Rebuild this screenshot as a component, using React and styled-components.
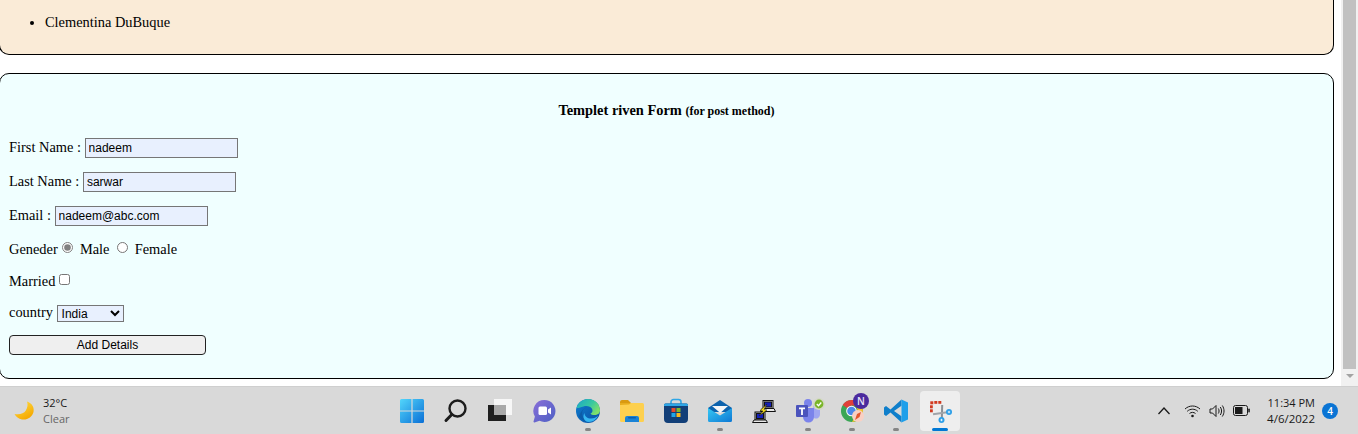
import styled, { createGlobalStyle } from "styled-components";

const GlobalStyle = createGlobalStyle`
  html, body {
    margin: 0;
    padding: 0;
    overflow: hidden;
    background: #fff;
  }
`;

const Screen = styled.div`
  width: 1358px;
  height: 434px;
  overflow: hidden;
  display: flex;
  flex-direction: column;
`;

const Browser = styled.div`
  height: 386px;
  display: flex;
  background: #fff;
`;

const Page = styled.div`
  flex: 1;
  min-width: 0;
  font-family: "Liberation Serif", "Times New Roman", serif;
  font-size: 14.4px;
  color: #000;
`;

const Card = styled.section`
  margin: 0 7px 0 -1px;
  border: 1px solid #000;
  border-radius: 10px;
  background: ${(p) => p.$bg};
`;

const UsersCard = styled(Card)`
  border-top: none;
  border-radius: 0 0 10px 10px;
  height: 54px;
  margin-bottom: 18px;

  ul {
    margin: 0;
    padding: 13px 0 0 45px;
  }
  li {
    line-height: 18px;
  }
`;

const FormCard = styled(Card)`
  padding: 26px 0 0 9px;
  height: 278px;
`;

const Heading = styled.h4`
  margin: 0 0 16px;
  font-size: 14.4px;
  line-height: 20px;
  text-align: center;
  padding-right: 9px;

  small {
    font-size: 12px;
  }
`;

const Row = styled.div`
  height: 20px;
  display: flex;
  align-items: center;
  margin-bottom: ${(p) => p.$gap || 0}px;
  white-space: pre;
`;

const TextInput = styled.input`
  width: 153px;
  height: 20px;
  box-sizing: border-box;
  border: 1px solid #767676;
  background: #e8f0fe;
  padding: 1px 3px;
  margin: 2px 0 0;
  font-family: "Liberation Sans", Arial, sans-serif;
  font-size: 12px;
  color: #000;
  outline: none;
`;

const Radio = styled.input`
  width: 11px;
  height: 11px;
  margin: 0 3px 3px ${(p) => p.$left}px;
  accent-color: #808080;
`;

const Check = styled.input`
  width: 11px;
  height: 11px;
  margin: 0 0 3px 0;
`;

const Country = styled.select`
  width: 67px;
  height: 17px;
  box-sizing: border-box;
  border: 1px solid #767676;
  border-radius: 0;
  background-color: #e8f0fe;
  font-family: "Liberation Sans", Arial, sans-serif;
  font-size: 12px;
  margin: 2px 0 0;
  padding: 0;
`;

const SubmitButton = styled.button`
  width: 197px;
  height: 20px;
  box-sizing: border-box;
  border: 1px solid #222;
  border-radius: 4px;
  background: #efefef;
  font-family: "Liberation Sans", Arial, sans-serif;
  font-size: 12px;
  color: #000;
  padding: 0;
`;

const Scrollbar = styled.div`
  width: 17px;
  background: #f1f1f1;
  display: flex;
  flex-direction: column;
  align-items: center;
`;

const Thumb = styled.div`
  width: 13px;
  height: 369px;
  background: #c1c1c1;
`;

const ArrowDown = styled.div`
  margin-top: 5px;
  width: 0;
  height: 0;
  border-left: 4px solid transparent;
  border-right: 4px solid transparent;
  border-top: 4px solid #a3a3a3;
`;

const Taskbar = styled.footer`
  height: 48px;
  background: #d9d9d9;
  border-top: 1px solid #cfcfcf;
  box-sizing: border-box;
  display: flex;
  align-items: center;
  font-family: "Open Sans", "Noto Sans", sans-serif;
  color: #1a1a1a;
`;

const Weather = styled.div`
  width: 392px;
  padding-left: 13px;
  box-sizing: border-box;
  display: flex;
  align-items: center;
  gap: 8px;
`;

const WeatherText = styled.div`
  font-size: 11px;
  line-height: 16px;
  padding-top: 1px;
  span {
    display: block;
  }
  span + span {
    color: #666;
  }
`;

const Apps = styled.div`
  display: flex;
  gap: 4px;
`;

const AppButton = styled.div`
  position: relative;
  width: 40px;
  height: 40px;
  margin-top: 1px;
  border-radius: 4px;
  display: flex;
  align-items: center;
  justify-content: center;
  background: ${(p) => (p.$active ? "#eeeeee" : "transparent")};

  svg {
    overflow: visible;
  }
`;

const RunDot = styled.i`
  position: absolute;
  left: 50%;
  bottom: 0;
  transform: translateX(-50%);
  width: ${(p) => (p.$active ? 16 : 6)}px;
  height: 3px;
  border-radius: 2px;
  background: ${(p) => (p.$active ? "#0078d4" : "#858585")};
`;

const Tray = styled.div`
  margin-left: auto;
  display: flex;
  align-items: center;
`;

const TrayIcons = styled.div`
  display: flex;
  align-items: center;
  gap: 8px;
  margin-right: 17px;

  svg:first-child {
    margin-right: 5px;
  }
`;

const Clock = styled.div`
  text-align: right;
  font-size: 11px;
  line-height: 16px;
  color: #1a1a1a;

  div + div {
    font-size: 11.5px;
  }
`;

const Badge = styled.div`
  width: 16px;
  height: 16px;
  margin: 0 20px 0 7px;
  border-radius: 50%;
  background: #0a74d4;
  color: #fff;
  font-size: 10px;
  font-weight: 600;
  display: flex;
  align-items: center;
  justify-content: center;
`;

const Moon = () => (
  <svg width="22" height="22" viewBox="0 0 22 22">
    <defs>
      <linearGradient id="moon" x1="0" y1="0" x2="0.6" y2="1">
        <stop offset="0" stopColor="#ffe14d" />
        <stop offset="1" stopColor="#f5a800" />
      </linearGradient>
    </defs>
    <path d="M14 1.500c5 1.600 7.500 6 6.500 10.500-1.100 5-6.400 8.300-11.500 7.400C5.500 18.800 3 17 1.500 14c5 1 9.200-.2 11.300-3.500C14.600 7.700 15 4.500 14 1.500z" fill="url(#moon)" />
  </svg>
);

const WindowsIcon = () => (
  <svg width="24" height="24" viewBox="0 0 24 24">
    <defs>
      <linearGradient id="win" x1="0" y1="0" x2="1" y2="1">
        <stop offset="0" stopColor="#52d6fb" />
        <stop offset="1" stopColor="#0a6fd6" />
      </linearGradient>
    </defs>
    <path d="M1.500 0H11.400V11.400H0V1.500A1.500 1.500 0 0 1 1.500 0zM12.600 0H22.500A1.500 1.500 0 0 1 24 1.500V11.400H12.600zM0 12.600H11.400V24H1.500A1.500 1.500 0 0 1 0 22.500zM12.600 12.600H24V22.500A1.500 1.500 0 0 1 22.500 24H12.600z" fill="url(#win)" />
  </svg>
);

const SearchIcon = () => (
  <svg width="24" height="24" viewBox="0 0 24 24" fill="none" stroke="#1c1c1c">
    <circle cx="13.500" cy="9.500" r="8" strokeWidth="2.400" />
    <path d="M7.800 15.500L2 21.500" strokeWidth="3" strokeLinecap="round" />
  </svg>
);

const TaskViewIcon = () => (
  <svg width="24" height="24" viewBox="0 0 24 24">
    <rect x="6" y="0" width="18" height="16" fill="#f7f7f7" />
    <rect x="0" y="6" width="18" height="16" fill="#1f1f1f" />
    <rect x="6" y="6" width="12" height="10" fill="#a9a9a9" />
  </svg>
);

const ChatIcon = () => (
  <svg width="24" height="24" viewBox="0 0 24 24">
    <defs>
      <linearGradient id="chat" x1="0" y1="0" x2="1" y2="1">
        <stop offset="0" stopColor="#8a6fd8" />
        <stop offset="1" stopColor="#4c5fc4" />
      </linearGradient>
    </defs>
    <path d="M12.500 1a11 11 0 1 1-5 20.800L2.500 23.500c-.6.200-1.100-.3-1-.9l1.400-5A11 11 0 0 1 12.500 1z" fill="url(#chat)" />
    <rect x="6.500" y="7.500" width="8.500" height="8.500" rx="1.500" fill="#fff" />
    <path d="M16 10.500l3-2v7l-3-2z" fill="#fff" />
  </svg>
);

const EdgeIcon = () => (
  <svg width="24" height="24" viewBox="0 0 24 24">
    <defs>
      <linearGradient id="edgeA" x1="0" y1="0" x2="1" y2="0.6">
        <stop offset="0" stopColor="#1aa7c8" />
        <stop offset="0.6" stopColor="#38c8a0" />
        <stop offset="1" stopColor="#7fe06a" />
      </linearGradient>
      <linearGradient id="edgeB" x1="0" y1="0" x2="1" y2="1">
        <stop offset="0" stopColor="#0f7fd0" />
        <stop offset="1" stopColor="#0b4ea2" />
      </linearGradient>
    </defs>
    <circle cx="12" cy="12" r="12" fill="url(#edgeB)" />
    <path d="M0.500 9C2 3.500 6.500 0 12 0c7 0 12 5 12 11.500 0 3-2.500 4.500-5.500 4.500-2 0-3.500-.5-4-1.500 2-1 2.500-3 1.500-4.800C14.500 7.500 11 6.500 7.500 7.500 4.500 8.300 2 9.500.5 9z" fill="url(#edgeA)" />
    <path d="M11 8.500c-3 .5-5 3-5 6 0 4 3.500 7.500 8 8-5 .5-9-1.500-11-5C5 11.500 8 9 11 8.500z" fill="#0c5ca8" />
    <path d="M8.500 14c0 3.200 3 5.600 6.500 5.600 3 0 5.500-1 7-3-1.500 4-5 6.400-9 6.400-3 0-5-2-5.500-4.500-.3-1.800.3-3.300 1-4.500z" fill="#36b6f0" />
  </svg>
);

const FolderIcon = () => (
  <svg width="24" height="22" viewBox="0 0 24 22">
    <path d="M0 2a2 2 0 0 1 2-2h6l3 3H0z" fill="#d99a10" />
    <rect x="0" y="3" width="24" height="19" rx="1.500" fill="#fdd04f" />
    <path d="M0 5l9-.5L11 3H0z" fill="#e7ad1e" />
    <path d="M5 22v-4a2 2 0 0 1 2-2h10a2 2 0 0 1 2 2v4z" fill="#1a83d6" />
    <rect x="8" y="17" width="8" height="1.500" rx=".7" fill="#0d5fae" />
  </svg>
);

const StoreIcon = () => (
  <svg width="24" height="24" viewBox="0 0 24 24">
    <path d="M7 5V3a2.500 2.500 0 0 1 2.500-2.500h5A2.500 2.500 0 0 1 17 3v2" fill="none" stroke="#2ea6e6" strokeWidth="1.600" />
    <path d="M0 6a1.500 1.500 0 0 1 1.500-1.500h21A1.500 1.500 0 0 1 24 6v14a4 4 0 0 1-4 4H4a4 4 0 0 1-4-4z" fill="#123f78" />
    <path d="M0 6a1.500 1.500 0 0 1 1.500-1.500h21A1.500 1.500 0 0 1 24 6v1H0z" fill="#2ea6e6" />
    <rect x="7.500" y="9" width="4" height="4" fill="#e8492c" />
    <rect x="12.500" y="9" width="4" height="4" fill="#7eb92e" />
    <rect x="7.500" y="14" width="4" height="4" fill="#21a4e8" />
    <rect x="12.500" y="14" width="4" height="4" fill="#fbb81c" />
  </svg>
);

const MailIcon = () => (
  <svg width="24" height="24" viewBox="0 0 24 24">
    <defs>
      <linearGradient id="mailA" x1="0" y1="0" x2="1" y2="1">
        <stop offset="0" stopColor="#36c8f4" />
        <stop offset="1" stopColor="#0d78d4" />
      </linearGradient>
    </defs>
    <path d="M0 9L12 1l12 8v4H0z" fill="#0c62ad" />
    <path d="M4 7h16L12.300 14z" fill="#f4f6f8" />
    <path d="M0 9l12 7.500L24 9v12.500a1.500 1.500 0 0 1-1.500 1.500h-21A1.500 1.500 0 0 1 0 21.500z" fill="url(#mailA)" />
  </svg>
);

const PuttyIcon = () => (
  <svg width="24" height="24" viewBox="0 0 24 24" stroke="#111" strokeWidth="1">
    <rect x="11" y="1.500" width="10" height="8" fill="#c9c9c9" />
    <rect x="12.500" y="3" width="7" height="5" fill="#1520b8" />
    <path d="M10 9.500h12l1.500 3H8.500z" fill="#e8e8e8" />
    <rect x="3" y="13" width="10" height="8" fill="#c9c9c9" />
    <rect x="4.500" y="14.500" width="7" height="5" fill="#1520b8" />
    <path d="M2 21h12l1.500 2.500H.5z" fill="#e8e8e8" />
    <path d="M15 5L8 11.500l3 .5-4 5 8-6-3-.5z" fill="#f7e017" strokeWidth=".5" />
  </svg>
);

const TeamsIcon = () => (
  <svg width="26" height="26" viewBox="0 0 26 26">
    <circle cx="13" cy="5" r="4" fill="#7b83eb" />
    <circle cx="21" cy="8.500" r="2.800" fill="#a0a6f1" />
    <path d="M8 10h11v9a5.500 5.500 0 0 1-11 0z" fill="#7b83eb" />
    <path d="M19 11h6v6a4 4 0 0 1-6 3z" fill="#a0a6f1" />
    <rect x="1" y="7" width="12" height="12" rx="1" fill="#4b53bc" />
    <path d="M4 9.500h6v1.700H7.900v5.800H6.100v-5.800H4z" fill="#fff" />
    <circle cx="24" cy="6" r="6" fill="#d4d8c6" />
    <circle cx="24" cy="6" r="4.400" fill="#7ab52a" />
    <path d="M21.800 6l1.700 1.700 2.800-3.200" fill="none" stroke="#fff" strokeWidth="1.300" />
  </svg>
);

const ChromeIcon = () => (
  <svg width="30" height="30" viewBox="0 0 30 30">
    <circle cx="15" cy="15" r="11" fill="#3aa655" />
    <path d="M15 4a11 11 0 0 1 9.500 5.500H15a5.500 5.500 0 0 0-4.800 2.800L5.700 9A11 11 0 0 1 15 4z" fill="#e0403a" />
    <path d="M24.500 9.500A11 11 0 0 1 15 26l4.700-8a5.500 5.500 0 0 0 0-6z" fill="#f5c52c" />
    <circle cx="14.500" cy="15" r="5.300" fill="#fff" />
    <circle cx="14.500" cy="15" r="4.300" fill="#4a88ea" />
    <circle cx="21" cy="20" r="6" fill="#f8d0c4" />
    <path d="M18 24l2-6 4-2-1.500 5z" fill="#e4572e" />
    <circle cx="24" cy="5" r="8" fill="#4b2a9e" />
    <text x="24" y="8.500" textAnchor="middle" fontSize="10" fontWeight="600" fontFamily="'Open Sans', sans-serif" fill="#e8e4f6">N</text>
  </svg>
);

const VsCodeIcon = () => (
  <svg width="24" height="24" viewBox="0 0 24 24">
    <path d="M17.500 0.500L6.500 10.500 2 7 0 8.500v7L2 17l4.500-3.500 11 10V17.300L10 12l7.500-5.300z" fill="#0f7fcb" />
    <path d="M17.500 0.500L24 3.600v16.800l-6.500 3.100z" fill="#1e9fea" />
  </svg>
);

const SnipIcon = () => (
  <svg width="26" height="26" viewBox="0 0 26 26">
    <path d="M15.200 7l-.4 15" stroke="#8b8f95" strokeWidth="2" />
    <path d="M6 16.200L22 14" stroke="#a0a4a9" strokeWidth="2" />
    <rect x="3.300" y="3.300" width="3" height="3" fill="#d23a20" />
    <rect x="7.300" y="3" width="3" height="2.800" fill="#d23a20" />
    <rect x="11.300" y="3" width="3" height="2.800" fill="#d23a20" />
    <rect x="3" y="7.300" width="2.800" height="3" fill="#d23a20" />
    <rect x="3" y="11.300" width="2.800" height="3" fill="#d23a20" />
    <circle cx="22" cy="14" r="3" fill="#2d9fe8" />
    <path d="M20.800 14h2.400M22 12.800v2.400" stroke="#fff" strokeWidth=".8" />
    <circle cx="14.500" cy="22" r="3" fill="#2d9fe8" />
    <path d="M13.300 22h2.400M14.500 20.800v2.400" stroke="#fff" strokeWidth=".8" />
  </svg>
);

const ChevronIcon = () => (
  <svg width="14" height="9" viewBox="0 0 14 9" fill="none" stroke="#1a1a1a" strokeWidth="1.300">
    <path d="M1.500 8L7 2l5.500 6" />
  </svg>
);

const WifiIcon = () => (
  <svg width="17" height="14" viewBox="0 0 17 14" fill="none" stroke="#1a1a1a" strokeWidth="1">
    <path d="M1 5c4.200-4 10.800-4 15 0" />
    <path d="M3.200 7.300c3-2.800 7.600-2.800 10.600 0" />
    <path d="M5.500 9.500c1.700-1.500 4.300-1.500 6 0" />
    <circle cx="8.500" cy="12" r="1.300" fill="#1a1a1a" stroke="none" />
  </svg>
);

const VolumeIcon = () => (
  <svg width="16" height="14" viewBox="0 0 16 14" fill="none" stroke="#1a1a1a" strokeWidth="1">
    <path d="M1 5h2.500L7 1.500v11L3.500 9H1z" />
    <path d="M9.300 4.500c1 1.500 1 3.500 0 5" />
    <path d="M11.300 3c1.700 2.500 1.700 5.500 0 8" />
    <path d="M13.300 1.500c2.300 3.500 2.300 7.500 0 11" />
  </svg>
);

const BatteryIcon = () => (
  <svg width="17" height="11" viewBox="0 0 17 11">
    <rect x=".5" y=".5" width="14" height="10" rx="2" fill="none" stroke="#1a1a1a" />
    <rect x="2" y="2" width="7.500" height="7" fill="#1a1a1a" />
    <rect x="15.300" y="3.500" width="1.500" height="4" rx=".7" fill="#1a1a1a" />
  </svg>
);

const apps = [
  { Icon: WindowsIcon },
  { Icon: SearchIcon },
  { Icon: TaskViewIcon },
  { Icon: ChatIcon },
  { Icon: EdgeIcon, running: true },
  { Icon: FolderIcon },
  { Icon: StoreIcon },
  { Icon: MailIcon, running: true },
  { Icon: PuttyIcon },
  { Icon: TeamsIcon, running: true },
  { Icon: ChromeIcon, running: true },
  { Icon: VsCodeIcon, running: true },
  { Icon: SnipIcon, active: true },
];

const App = () => {
  return (
    <Screen>
      <GlobalStyle />
      <Browser>
        <Page>
          <UsersCard $bg="antiquewhite">
            <ul>
              <li>Clementina DuBuque</li>
            </ul>
          </UsersCard>
          <FormCard $bg="azure">
            <Heading>
              Templet riven Form <small>(for post method)</small>
            </Heading>
            <Row $gap={14}>
              {"First Name : "}
              <TextInput defaultValue="nadeem" />
            </Row>
            <Row $gap={14}>
              {"Last Name : "}
              <TextInput defaultValue="sarwar" />
            </Row>
            <Row $gap={14}>
              {"Email : "}
              <TextInput defaultValue="nadeem@abc.com" />
            </Row>
            <Row $gap={12}>
              {"Geneder "}
              <Radio type="radio" name="gender" defaultChecked $left={1} />
              {" Male "}
              <Radio type="radio" name="gender" $left={4} />
              {" Female"}
            </Row>
            <Row $gap={11}>
              {"Married "}
              <Check type="checkbox" />
            </Row>
            <Row $gap={13}>
              {"country "}
              <Country defaultValue="India">
                <option>India</option>
              </Country>
            </Row>
            <SubmitButton type="button">Add Details</SubmitButton>
          </FormCard>
        </Page>
        <Scrollbar>
          <Thumb />
          <ArrowDown />
        </Scrollbar>
      </Browser>
      <Taskbar>
        <Weather>
          <Moon />
          <WeatherText>
            <span>32°C</span>
            <span>Clear</span>
          </WeatherText>
        </Weather>
        <Apps>
          {apps.map(({ Icon, running, active }, i) => (
            <AppButton key={i} $active={active}>
              <Icon />
              {(running || active) && <RunDot $active={active} />}
            </AppButton>
          ))}
        </Apps>
        <Tray>
          <TrayIcons>
            <ChevronIcon />
            <WifiIcon />
            <VolumeIcon />
            <BatteryIcon />
          </TrayIcons>
          <Clock>
            <div>11:34 PM</div>
            <div>4/6/2022</div>
          </Clock>
          <Badge>4</Badge>
        </Tray>
      </Taskbar>
    </Screen>
  );
};

export default App;
